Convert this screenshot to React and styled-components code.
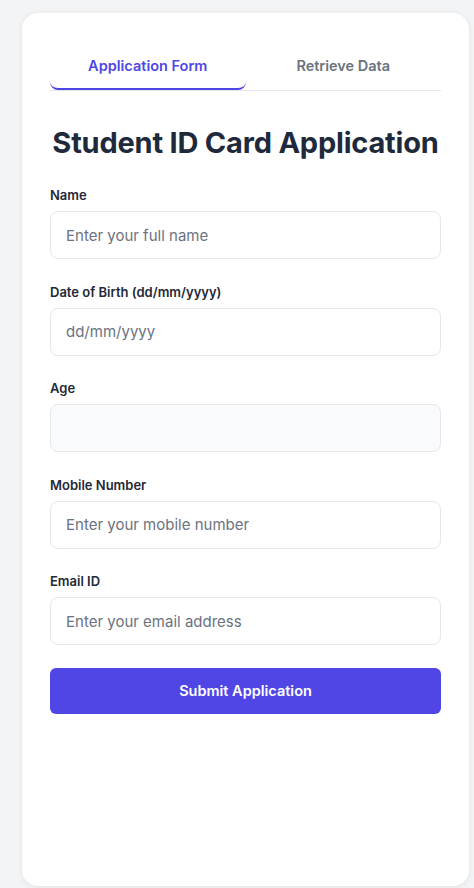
import styled, { createGlobalStyle } from 'styled-components';
import { useState } from 'react';

const GlobalStyle = createGlobalStyle`
  html, body {
    margin: 0;
    padding: 0;
    background: #f3f4f6;
    font-family: "Inter", "Noto Sans", sans-serif;
  }
  * { box-sizing: border-box; }
`;

const fields = [
  { id: 'name', label: 'Name', placeholder: 'Enter your full name' },
  { id: 'dob', label: 'Date of Birth (dd/mm/yyyy)', placeholder: 'dd/mm/yyyy' },
  { id: 'age', label: 'Age', placeholder: '', disabled: true },
  { id: 'mobile', label: 'Mobile Number', placeholder: 'Enter your mobile number' },
  { id: 'email', label: 'Email ID', placeholder: 'Enter your email address' },
];

const App = () => {
  const [tab, setTab] = useState('form');

  return (
    <Page>
      <GlobalStyle />
      <Card>
        <Tabs>
          <Tab $active={tab === 'form'} onClick={() => setTab('form')}>Application Form</Tab>
          <Tab $active={tab === 'retrieve'} onClick={() => setTab('retrieve')}>Retrieve Data</Tab>
        </Tabs>

        <Title>Student ID Card Application</Title>

        <Form onSubmit={(e) => e.preventDefault()}>
          {fields.map((f) => (
            <Field key={f.id}>
              <Label htmlFor={f.id}>{f.label}</Label>
              <Input id={f.id} placeholder={f.placeholder} disabled={f.disabled} />
            </Field>
          ))}
          <SubmitButton type="submit">Submit Application</SubmitButton>
        </Form>
      </Card>
    </Page>
  );
};

const Page = styled.div`
  padding: 13px 5px 2px 22px;
`;

const Card = styled.div`
  height: 873px;
  background: #fff;
  border-radius: 16px;
  box-shadow: 0 1px 6px rgba(15, 23, 42, 0.08);
  padding: 32px 28px 0;
`;

const Tabs = styled.div`
  display: grid;
  grid-template-columns: 1fr 1fr;
  border-bottom: 1px solid #e5e7eb;
`;

const Tab = styled.button`
  font-family: inherit;
  font-size: 14.5px;
  font-weight: 600;
  line-height: 22px;
  padding: 10px 0 11px;
  background: none;
  border: none;
  border-bottom: 2px solid ${(p) => (p.$active ? '#4f46e5' : 'transparent')};
  border-radius: 0 0 8px 8px;
  color: ${(p) => (p.$active ? '#4f46e5' : '#6b7280')};
  cursor: pointer;
`;

const Title = styled.h1`
  margin: 34px 0 24px;
  font-size: 29px;
  line-height: 36px;
  font-weight: 700;
  letter-spacing: -0.2px;
  color: #1e293b;
  text-align: center;
  white-space: nowrap;
`;

const Form = styled.form`
  display: flex;
  flex-direction: column;
  gap: 22.5px;
`;

const Field = styled.div`
  display: flex;
  flex-direction: column;
  gap: 6px;
`;

const Label = styled.label`
  font-size: 13px;
  line-height: 20px;
  font-weight: 600;
  color: #1f2937;
`;

const Input = styled.input`
  height: 48px;
  padding: 0 15px;
  font-family: inherit;
  font-size: 15px;
  color: #111827;
  background: #fff;
  border: 1px solid #e5e7eb;
  border-radius: 8px;
  outline: none;

  &::placeholder {
    color: #6b7280;
  }

  &:disabled {
    background: #f9fafb;
  }
`;

const SubmitButton = styled.button`
  height: 46px;
  margin-top: 0;
  font-family: inherit;
  font-size: 14.5px;
  font-weight: 600;
  color: #fff;
  background: #4f46e5;
  border: none;
  border-radius: 6px;
  cursor: pointer;
`;

export default App;
